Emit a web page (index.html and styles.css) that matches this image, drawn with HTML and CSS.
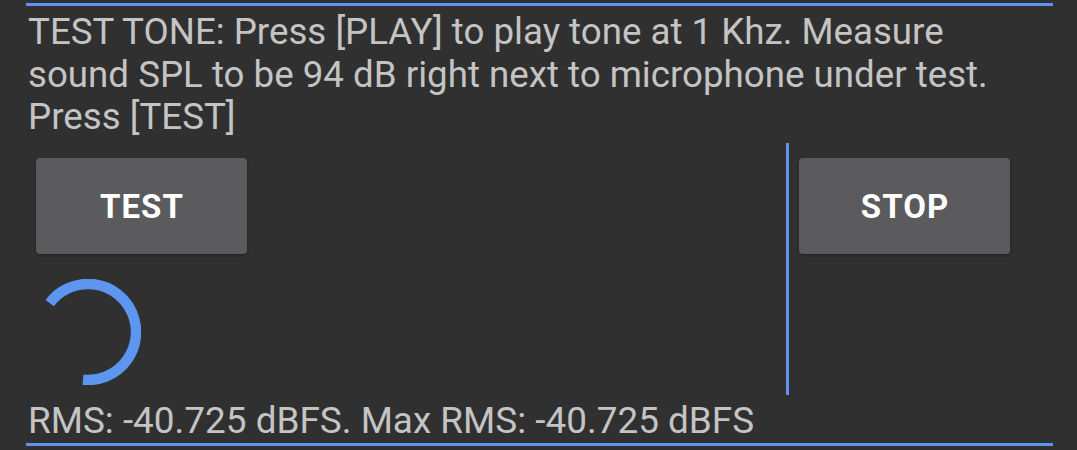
FILE: index.html
```html
<!DOCTYPE html>
<html>
<head>
<meta charset="utf-8">
<link rel="stylesheet" href="styles.css">
</head>
<body>
<div class="panel">
  <p class="info">TEST TONE: Press [PLAY] to play tone at 1 Khz. Measure sound SPL to be 94 dB right next to microphone under test. Press [TEST]</p>
  <div class="row">
    <div class="left">
      <button class="btn">TEST</button>
      <svg class="spinner" width="106" height="106" viewBox="0 0 106 106">
        <path d="M14.7 24.1 A48 48 0 1 1 48 100.7" fill="none" stroke="#5c96f0" stroke-width="10.5" stroke-linecap="butt"/>
      </svg>
    </div>
    <div class="right">
      <button class="btn">STOP</button>
    </div>
  </div>
  <p class="result">RMS: -40.725 dBFS. Max RMS: -40.725 dBFS</p>
</div>
</body>
</html>
```
FILE: styles.css
```css
html, body {
  margin: 0;
  padding: 0;
  background: #303030;
  height: 450px;
  overflow: hidden;
}
body {
  font-family: Roboto, "Noto Sans", sans-serif;
}
.panel {
  margin: 3px 24px 0 26px;
  border-top: 3px solid #5c96f0;
  border-bottom: 3px solid #5c96f0;
  width: 1027px;
  box-sizing: border-box;
}
.info {
  margin: 0;
  padding: 5px 0 0 2px;
  font-size: 36.7px;
  line-height: 42.5px;
  color: #c4c4c4;
  height: 132px;
}
.row {
  display: flex;
  height: 252px;
}
.left {
  width: 760px;
  display: flex;
  flex-direction: column;
  align-items: flex-start;
  padding: 15px 0 0 10px;
  box-sizing: border-box;
}
.right {
  flex: 1;
  border-left: 3px solid #5c96f0;
  padding: 15px 0 0 10px;
}
.btn {
  width: 211px;
  height: 96px;
  background: #5b5b5d;
  border: none;
  border-radius: 4px;
  color: #ffffff;
  font-family: Roboto, "Noto Sans", sans-serif;
  font-weight: 700;
  font-size: 33px;
  letter-spacing: 1px;
  text-indent: 1px;
  box-shadow: 0 1px 3px rgba(0,0,0,0.35);
  padding: 0;
}
.spinner {
  display: block;
  margin: 25px 0 0 -1px;
}
.result {
  margin: 0;
  padding: 5px 0 0 2px;
  font-size: 36.9px;
  line-height: 42.5px;
  color: #c4c4c4;
  height: 48px;
  box-sizing: border-box;
}
```
